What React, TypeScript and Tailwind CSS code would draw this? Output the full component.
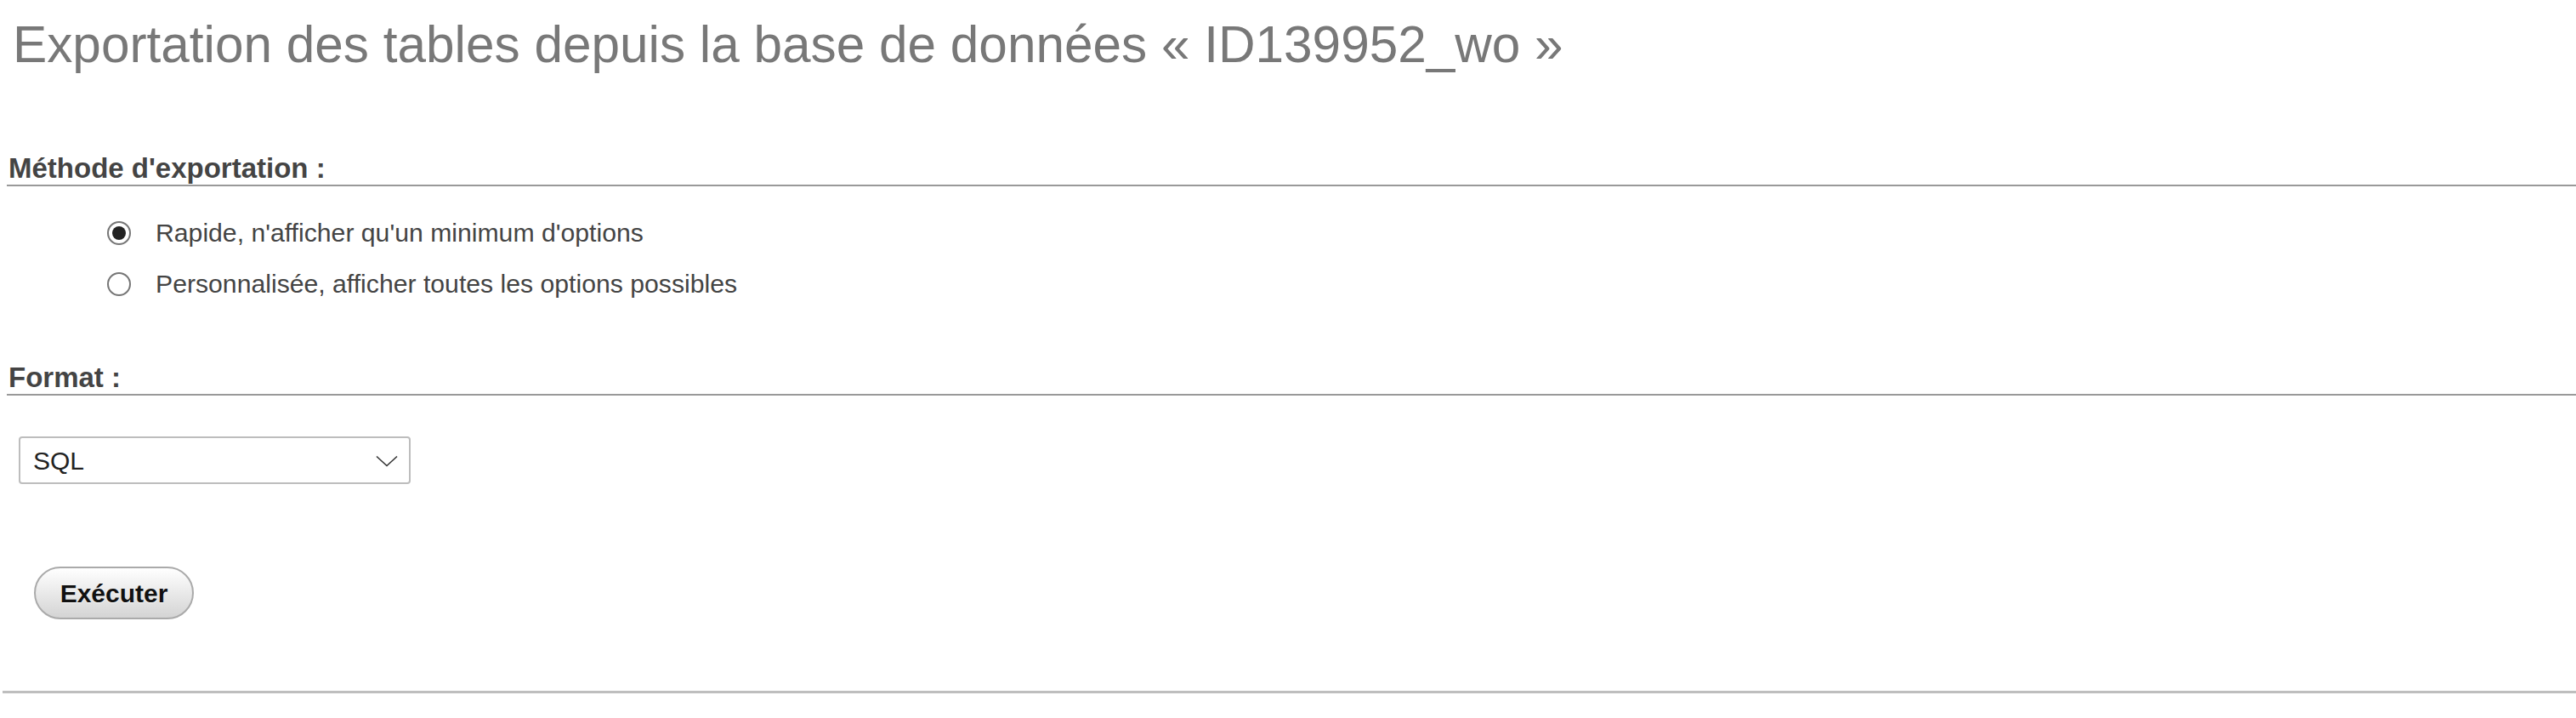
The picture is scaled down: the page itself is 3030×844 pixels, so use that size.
import React, { useState } from 'react';

const font = { fontFamily: '"Liberation Sans", Arial, sans-serif' };

type Method = 'quick' | 'custom';

const Radio: React.FC<{ checked: boolean; label: string; onSelect: () => void }> = ({ checked, label, onSelect }) => (
  <label className="flex items-center h-[60px] pl-[126px] cursor-pointer" onClick={onSelect}>
    <span className="w-[28px] h-[28px] rounded-full border-2 border-[#767676] bg-white flex items-center justify-center shrink-0">
      {checked && <span className="w-[16px] h-[16px] rounded-full bg-[#222]"></span>}
    </span>
    <span className="ml-[29px] text-[30.2px] leading-[60px] text-[#444]">{label}</span>
  </label>
);

const Legend: React.FC<{ children: React.ReactNode }> = ({ children }) => (
  <div className="ml-[8px] pl-[2px] border-b-2 border-[#999] text-[33px] leading-[38px] font-bold text-[#444]">
    {children}
  </div>
);

export default function App() {
  const [method, setMethod] = useState<Method>('quick');
  const [format, setFormat] = useState('sql');

  return (
    <div className="min-h-[844px] bg-white" style={font}>
      <h2 className="pt-[18px] pl-[15px] text-[60.3px] leading-[69px] font-normal text-[#787878]">
        Exportation des tables depuis la base de données « ID139952_wo »
      </h2>

      {/* Méthode */}
      <div className="mt-[92px]">
        <Legend>Méthode d'exportation :</Legend>
        <div className="mt-[25px]">
          <Radio
            checked={method === 'quick'}
            label="Rapide, n'afficher qu'un minimum d'options"
            onSelect={() => setMethod('quick')}
          />
          <Radio
            checked={method === 'custom'}
            label="Personnalisée, afficher toutes les options possibles"
            onSelect={() => setMethod('custom')}
          />
        </div>
      </div>

      {/* Format */}
      <div className="mt-[61px]">
        <Legend>Format :</Legend>
        <div className="mt-[48px] ml-[22px] relative w-[461px] h-[56px]">
          <select
            value={format}
            onChange={(e) => setFormat(e.target.value)}
            className="appearance-none w-full h-full rounded-[4px] border-2 border-[#bdbdbd] bg-white pl-[15px] text-[30px] text-[#222] outline-none"
            style={font}
          >
            <option value="sql">SQL</option>
            <option value="csv">CSV</option>
            <option value="json">JSON</option>
            <option value="xml">XML</option>
          </select>
          <svg
            className="absolute right-[15px] top-[22px] pointer-events-none"
            width="26"
            height="14"
            viewBox="0 0 26 14"
            fill="none"
          >
            <path d="M1 1.5 L13 12.5 L25 1.5" stroke="#333" strokeWidth="1.6" />
          </svg>
        </div>
      </div>

      <div className="mt-[97px] ml-[40px]">
        <button
          className="w-[188px] h-[62px] rounded-full border-2 border-[#aaa] bg-gradient-to-b from-white to-[#d4d4d4] text-[30px] font-bold text-[#111] [text-shadow:0_1px_0_#fff]"
          style={font}
        >
          Exécuter
        </button>
      </div>

      <div className="mt-[84px] ml-[3px] h-[3px] bg-[#bebebe]"></div>
    </div>
  );
}
